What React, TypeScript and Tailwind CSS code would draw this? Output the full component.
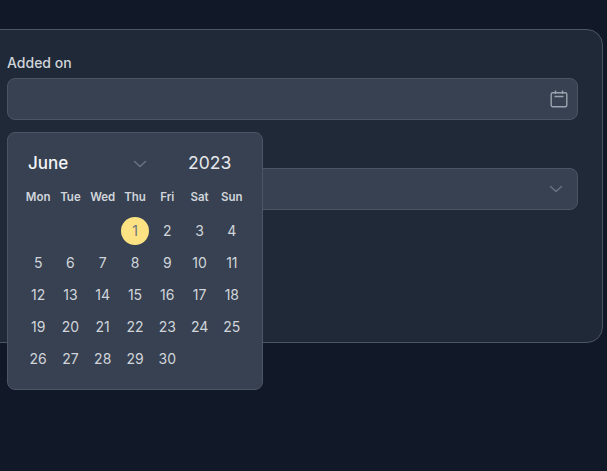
import React from "react";

const days = ["Mon", "Tue", "Wed", "Thu", "Fri", "Sat", "Sun"];
const cells: (number | null)[] = [null, null, null, ...Array.from({ length: 30 }, (_, i) => i + 1)];

function Chevron({ className }: { className: string }) {
  return (
    <svg className={className} viewBox="0 0 14 8" fill="none" stroke="currentColor" strokeWidth="1.5" strokeLinecap="round" strokeLinejoin="round">
      <path d="M1.5 1.5 7 6.5l5.5-5" />
    </svg>
  );
}

export default function App() {
  return (
    <div className="min-h-[471px] w-[607px] overflow-hidden bg-[#111827] pt-[29px] font-['Inter','Liberation_Sans',sans-serif]">
      <div className="relative -ml-[18px] h-[314px] w-[621px] rounded-2xl border border-[#4b5563] bg-[#1f2937] px-6 pt-[23px]">
        <label className="mb-[5px] block text-sm leading-5 font-medium text-[#d1d5db]">Added on</label>
        <div className="flex h-[42px] items-center justify-end rounded-lg border border-[#4b5563] bg-[#374151] pr-[9px]">
          <svg className="h-[18px] w-[18px] text-[#9ca3af]" viewBox="0 0 18 18" fill="none" stroke="currentColor" strokeWidth="1.4">
            <rect x="1.2" y="2.7" width="15.6" height="14" rx="1.5" />
            <path d="M4.5 6.5h9M5.5 0.5v3.6M12.5 0.5v3.6" />
          </svg>
        </div>
        <div className="mt-12 flex h-[42px] items-center justify-end rounded-lg border border-[#4b5563] bg-[#374151] pr-[14px]">
          <Chevron className="h-2 w-3.5 text-[#6b7280]" />
        </div>

        <div className="absolute top-[102px] left-6 z-10 h-[258px] w-[256px] rounded-lg border border-[#4b5563] bg-[#374151] px-[14px]">
          <div className="flex h-[60px] items-center pt-[1px] text-[#e5e7eb]">
            <span className="ml-[6px] w-[41px] text-[17px] font-medium text-[#f3f4f6]">June</span>
            <Chevron className="ml-[64px] h-2 w-3.5 text-[#6b7280]" />
            <span className="ml-[41px] text-[17.5px] text-[#e5e7eb]">2023</span>
          </div>
          <div className="grid grid-cols-7 text-center">
            {days.map((d) => (
              <div key={d} className="h-[22px] text-[11.5px] leading-[8px] font-semibold text-[#d1d5db]">{d}</div>
            ))}
          </div>
          <div className="grid grid-cols-7 text-center">
            {cells.map((c, i) => (
              <div key={i} className="flex h-8 items-center justify-center">
                {c === 1 ? (
                  <span className="flex h-7 w-7 items-center justify-center rounded-full bg-[#fde283] text-sm text-[#6b7280]">1</span>
                ) : (
                  <span className="text-sm text-[#d1d5db]">{c}</span>
                )}
              </div>
            ))}
          </div>
        </div>
      </div>
    </div>
  );
}
